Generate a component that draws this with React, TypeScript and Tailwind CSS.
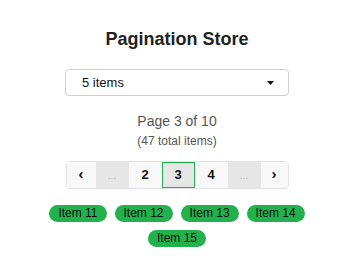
const pages = [
  { label: '‹', kind: 'arrow', w: 'w-[29px]' },
  { label: '...', kind: 'gap', w: 'w-[33px]' },
  { label: '2', kind: 'page', w: 'w-[33px]' },
  { label: '3', kind: 'current', w: 'w-[33px]' },
  { label: '4', kind: 'page', w: 'w-[33px]' },
  { label: '...', kind: 'gap', w: 'w-[33px]' },
  { label: '›', kind: 'arrow', w: 'w-[27px]' },
];

const items = ['Item 11', 'Item 12', 'Item 13', 'Item 14', 'Item 15'];

function PageButton({ label, kind, w }: { label: string; kind: string; w: string }) {
  if (kind === 'gap') {
    return (
      <div className={`${w} h-full flex items-center justify-center bg-[#e6e6e6] text-[#b5b5b5] text-[10px]`}>
        {label}
      </div>
    );
  }
  if (kind === 'current') {
    return (
      <div className={`${w} h-full flex items-center justify-center bg-[#e6e6e6] border border-[#22b14c] text-[13px] font-bold text-[#111]`}>
        {label}
      </div>
    );
  }
  return (
    <div
      className={`${w} h-full flex items-center justify-center bg-[#f8f8f8] font-bold text-[#111] ${
        kind === 'arrow' ? 'text-[15px] pb-[2px]' : 'text-[13px]'
      }`}
    >
      {label}
    </div>
  );
}

export default function App() {
  return (
    <div className="min-h-screen bg-white flex flex-col items-center pt-[29px] font-['Liberation_Sans',Arial,sans-serif]">
      <h1 className="text-[18px] leading-[20px] font-bold text-[#1f1f1f]">Pagination Store</h1>

      <div className="mt-[20px] w-[224px] h-[27px] border border-[#cfcfcf] rounded-[4px] flex items-center justify-between pl-[16px] pr-[14px] text-[13px] text-[#111]">
        <span>5 items</span>
        <svg width="7" height="4" viewBox="0 0 7 4">
          <path d="M0 0 L7 0 L3.5 4 Z" fill="#111" />
        </svg>
      </div>

      <p className="mt-[17px] text-[14px] leading-[16px] text-[#555]">Page 3 of 10</p>
      <p className="mt-[5px] text-[12px] leading-[14px] text-[#555]">(47 total items)</p>

      <div className="mt-[13px] h-[28px] flex border border-[#e3e3e3] rounded-[4px] overflow-hidden">
        {pages.map((p, i) => (
          <PageButton key={i} label={p.label} kind={p.kind} w={p.w} />
        ))}
      </div>

      <div className="mt-[16px] w-[280px] flex flex-wrap justify-center gap-x-[8px] gap-y-[8px]">
        {items.map((it) => (
          <span
            key={it}
            className="h-[17px] px-[9px] rounded-full bg-[#22b14c] text-[12px] leading-[17px] text-[#111]"
          >
            {it}
          </span>
        ))}
      </div>
    </div>
  );
}
